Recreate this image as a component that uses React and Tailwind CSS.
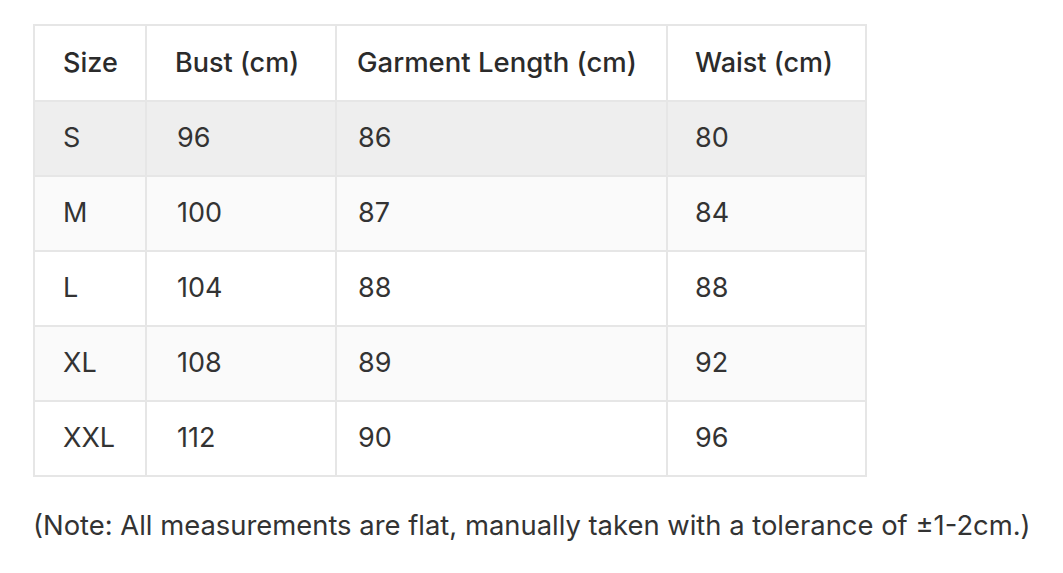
import React from "react";

const rows = [
  { size: "S", bust: "96", length: "86", waist: "80", bg: "bg-[#eeeeee]" },
  { size: "M", bust: "100", length: "87", waist: "84", bg: "bg-[#fafafa]" },
  { size: "L", bust: "104", length: "88", waist: "88", bg: "bg-white" },
  { size: "XL", bust: "108", length: "89", waist: "92", bg: "bg-[#fafafa]" },
  { size: "XXL", bust: "112", length: "90", waist: "96", bg: "bg-white" },
];

export default function App() {
  return (
    <div
      className="w-[1063px] h-[573px] bg-white pl-[33px] pt-[24px] text-[#333333]"
      style={{ fontFamily: "Inter, 'Noto Sans', sans-serif" }}
    >
      <table className="border-collapse table-fixed w-[832px] text-[27px]">
        <colgroup>
          <col className="w-[112px]" />
          <col className="w-[190px]" />
          <col className="w-[331px]" />
          <col className="w-[199px]" />
        </colgroup>
        <thead>
          <tr className="bg-white text-[#2b2b2b]">
            <th className="h-[76px] border-2 border-[#e6e6e6] pl-[28px] text-left font-medium">Size</th>
            <th className="border-2 border-[#e6e6e6] pl-[28px] text-left font-medium">Bust (cm)</th>
            <th className="border-2 border-[#e6e6e6] pl-[20px] text-left font-medium text-[27.5px]">Garment Length (cm)</th>
            <th className="border-2 border-[#e6e6e6] pl-[27px] text-left font-medium">Waist (cm)</th>
          </tr>
        </thead>
        <tbody>
          {rows.map((r) => (
            <tr key={r.size} className={r.bg}>
              <td className="h-[75px] border-2 border-[#e6e6e6] pl-[28px]">{r.size}</td>
              <td className="border-2 border-[#e6e6e6] pl-[30px]">{r.bust}</td>
              <td className="border-2 border-[#e6e6e6] pl-[21px]">{r.length}</td>
              <td className="border-2 border-[#e6e6e6] pl-[27px]">{r.waist}</td>
            </tr>
          ))}
        </tbody>
      </table>
      <p className="mt-[28px] text-[27.4px] text-[#333333]">
        (Note: All measurements are flat, manually taken with a tolerance of ±1-2cm.)
      </p>
    </div>
  );
}
